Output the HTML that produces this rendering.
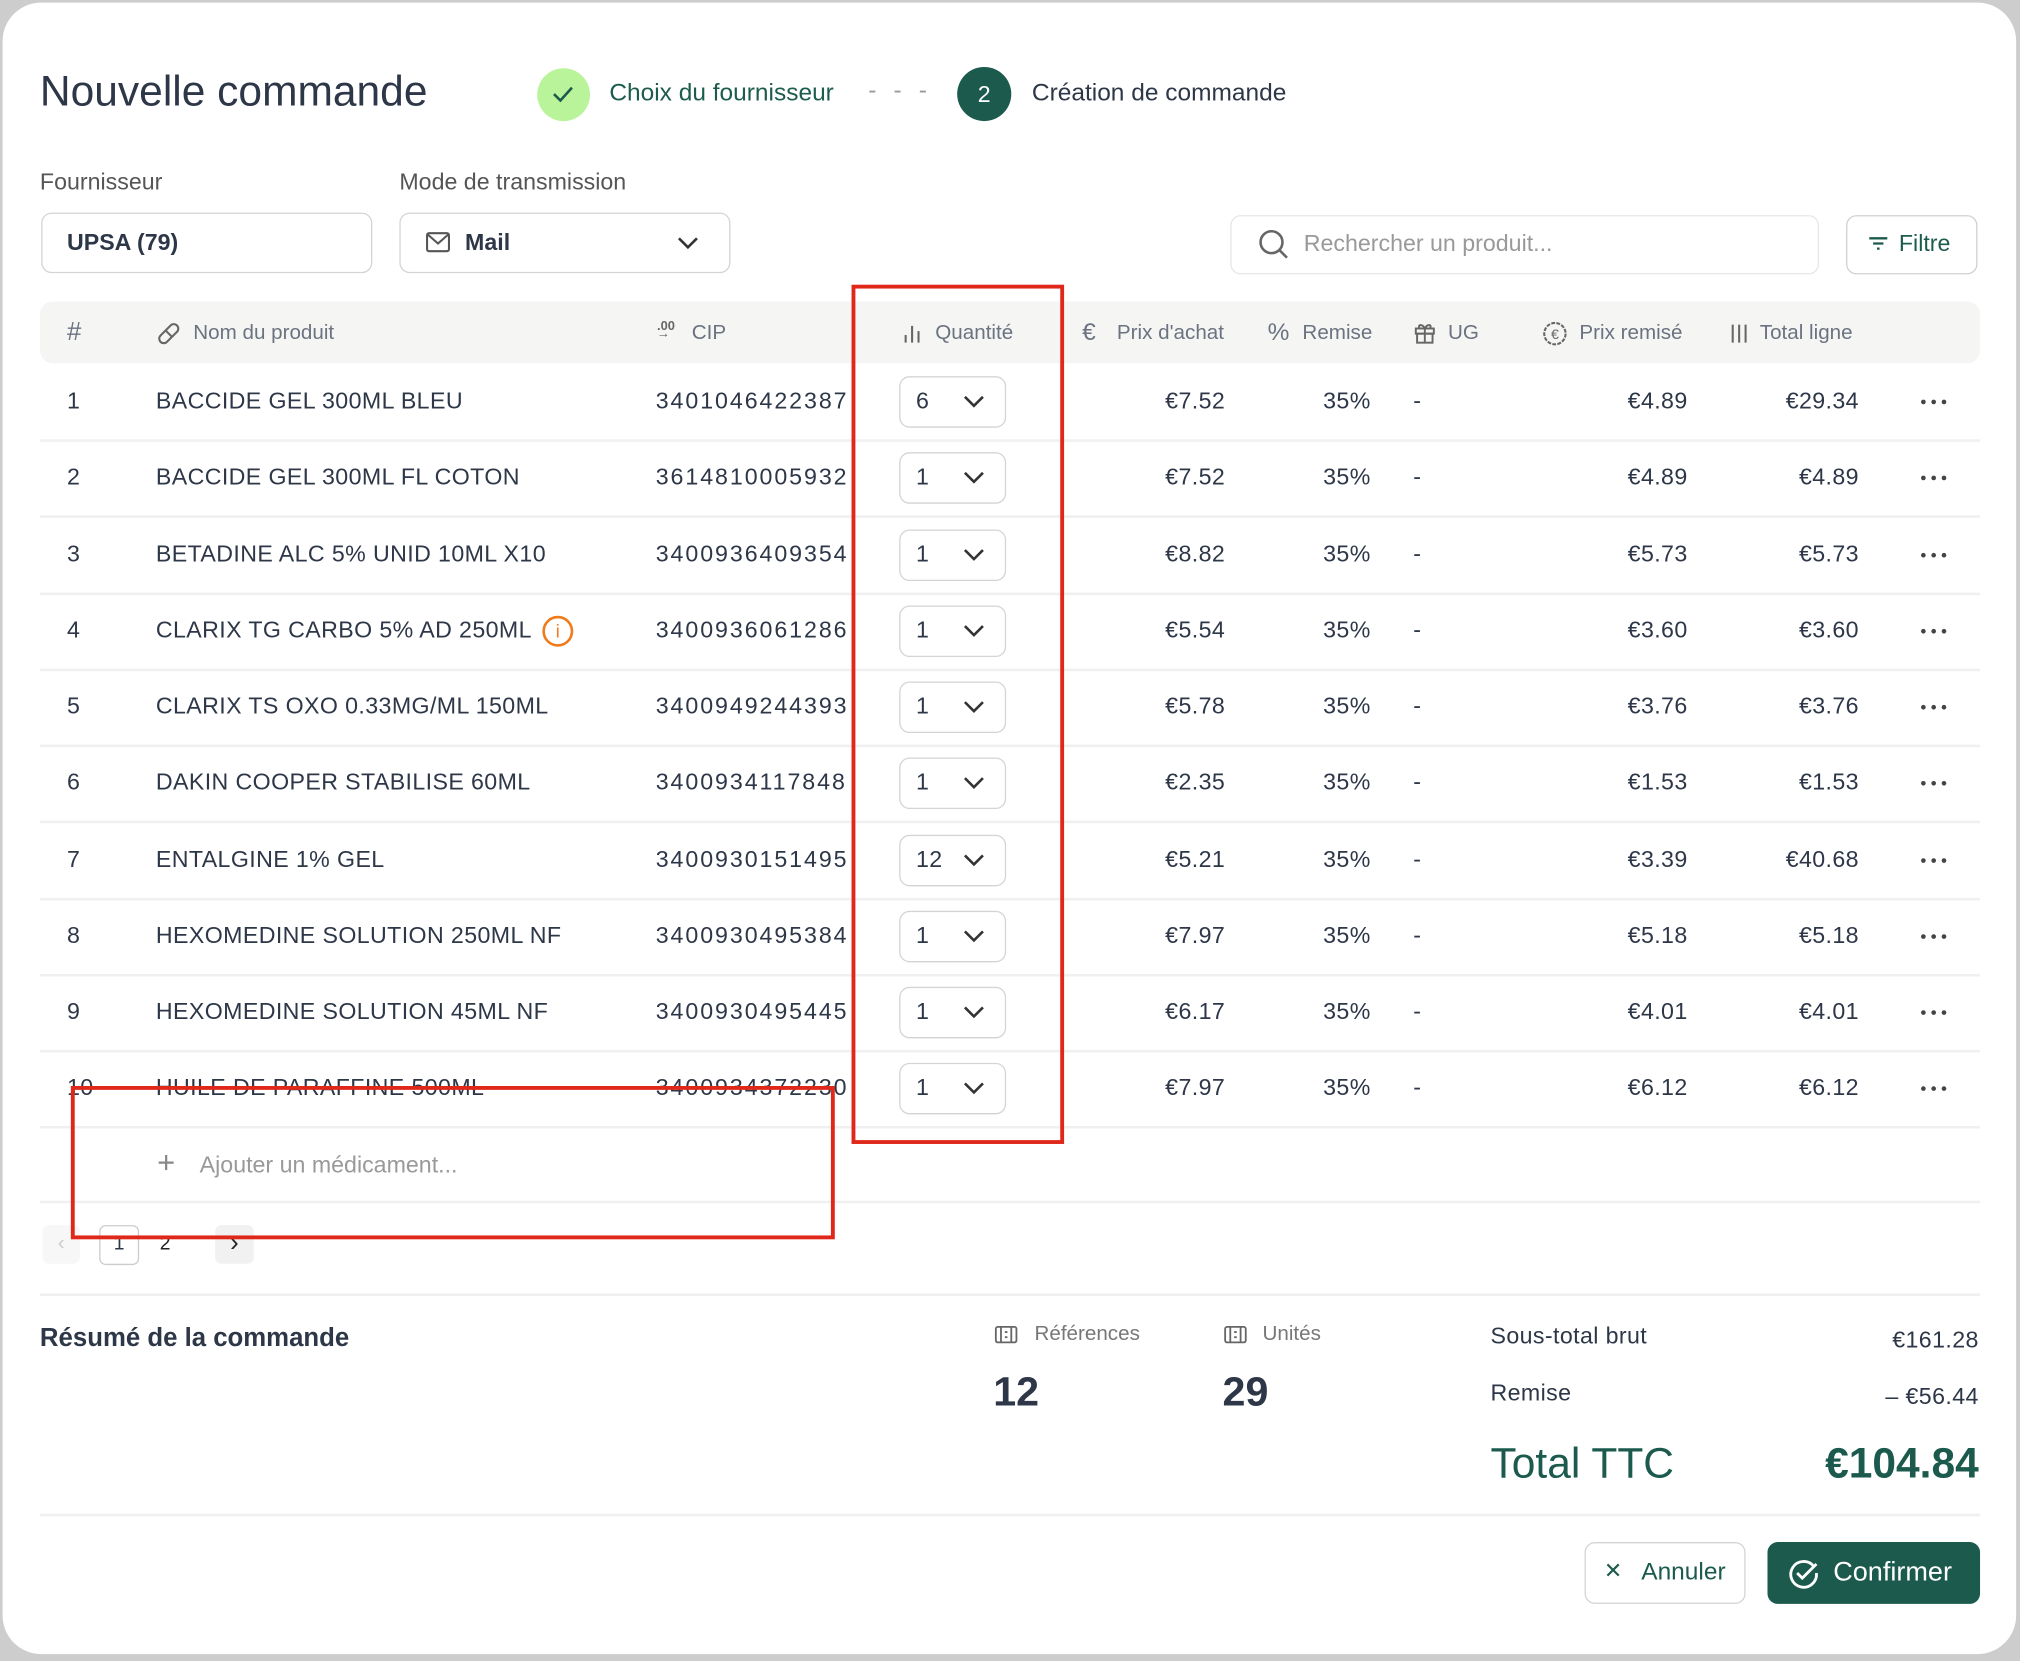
<!DOCTYPE html>
<html><head><meta charset="utf-8">
<style>
*{margin:0;padding:0;box-sizing:border-box}
html,body{width:2020px;height:1660px;overflow:hidden;background:#cdcdcd;font-family:"Liberation Sans",sans-serif}
#w{position:absolute;left:0;top:0;width:1568px;height:1289px;transform:scale(1.28826);transform-origin:0 0}
.card{position:absolute;left:2px;top:2px;width:1563px;height:1282px;background:#fff;border-radius:30px}
.a{position:absolute;white-space:nowrap}
.t{color:#2d3748;font-size:18px;letter-spacing:0.3px}
.hd{color:#6b7280;font-size:16px;top:249px}
.r{text-align:right}
.box{position:absolute;border:1px solid #d4d4d4;border-radius:8px;background:#fff}
.line{position:absolute;left:31px;width:1506px;height:2px;background:#f0f0f0}
svg{position:absolute}
.red{position:absolute;border:3px solid #e0281a}
</style></head><body><div id="w">
<div class="card"></div>
<div class="a" style="left:31px;top:52px;font-size:33px;color:#2d3748">Nouvelle commande</div>
<div class="a" style="left:417px;top:53px;width:41px;height:41px;border-radius:50%;background:#b9f39a"></div>
<svg style="left:427px;top:63px" width="20" height="20" viewBox="0 0 20 20"><path d="M3 10l5 5 9-10" fill="none" stroke="#1b5a4c" stroke-width="2"/></svg>
<div class="a" style="left:473px;top:62px;font-size:19px;color:#1d5c4d">Choix du fournisseur</div>
<div class="a" style="left:674px;top:60px;font-size:19px;color:#999;letter-spacing:4px">- - -</div>
<div class="a" style="left:743px;top:52px;width:42px;height:42px;border-radius:50%;background:#1b5a4c;color:#fff;font-size:18px;text-align:center;line-height:42px">2</div>
<div class="a" style="left:801px;top:62px;font-size:19px;color:#2d3748">Création de commande</div>

<div class="a" style="left:31px;top:131px;font-size:18px;color:#555">Fournisseur</div>
<div class="a" style="left:310px;top:131px;font-size:18px;color:#555">Mode de transmission</div>
<div class="box" style="left:32px;top:165px;width:257px;height:47px;border-width:1.5px"></div>
<div class="a" style="left:52px;top:178px;font-size:18px;font-weight:bold;color:#2d3748">UPSA (79)</div>
<div class="box" style="left:310px;top:165px;width:257px;height:47px;border-width:1.5px"></div>
<svg style="left:330px;top:179px" width="20" height="18" viewBox="0 0 20 18"><rect x="1.5" y="2" width="17" height="14" rx="1.5" fill="none" stroke="#555" stroke-width="1.6"/><path d="M2 3l8 7 8-7" fill="none" stroke="#555" stroke-width="1.6"/></svg>
<div class="a" style="left:361px;top:178px;font-size:18px;font-weight:bold;color:#2d3748">Mail</div>
<svg style="left:525px;top:181px" width="18" height="14" viewBox="0 0 18 14"><path d="M2 4l7 7 7-7" fill="none" stroke="#333" stroke-width="2"/></svg>

<div class="box" style="left:955px;top:167px;width:457px;height:46px;border-color:#e6e6e6"></div>
<svg style="left:976px;top:177px" width="26" height="26" viewBox="0 0 26 26"><circle cx="11" cy="11" r="8.5" fill="none" stroke="#666" stroke-width="2"/><path d="M17 17l6 6" stroke="#666" stroke-width="2"/></svg>
<div class="a" style="left:1012px;top:179px;font-size:18px;color:#999">Rechercher un produit...</div>
<div class="box" style="left:1433px;top:167px;width:102px;height:46px;border-color:#d0d0d0;border-width:1.5px"></div>
<svg style="left:1449px;top:182px" width="18" height="14" viewBox="0 0 18 14"><path d="M2 3h14M5 7h8M8 11h2" stroke="#1b5a4c" stroke-width="1.8"/></svg>
<div class="a" style="left:1474px;top:179px;font-size:18px;color:#1d5c4d">Filtre</div>

<div class="a" style="left:31px;top:234px;width:1506px;height:48px;background:#f5f6f4;border-radius:10px"></div>
<div class="a hd" style="left:52px;top:247px;font-size:20px">#</div>
<svg style="left:121px;top:249px" width="20" height="20" viewBox="0 0 20 20"><rect x="1" y="6.5" width="18" height="7" rx="3.5" transform="rotate(-45 10 10)" fill="none" stroke="#666" stroke-width="1.6"/><path d="M7.5 7.5l5 5" stroke="#666" stroke-width="1.6"/></svg>
<div class="a hd" style="left:150px;top:250px">Nom du produit</div>
<div class="a" style="left:510px;top:248px;font-size:10px;color:#666;font-weight:bold">.00<br><span style="font-size:10px;position:relative;top:-5px">→</span></div>
<div class="a hd" style="left:537px;top:250px">CIP</div>
<svg style="left:700px;top:250px" width="16" height="18" viewBox="0 0 16 18"><path d="M3 16v-6M8 16V3M13 16v-9" stroke="#666" stroke-width="1.6"/></svg>
<div class="a hd" style="left:726px;top:250px">Quantité</div>
<div class="a hd" style="left:840px;font-size:19px;top:248px">€</div>
<div class="a hd" style="left:867px;top:250px">Prix d'achat</div>
<div class="a hd" style="left:984px;font-size:19px;top:248px">%</div>
<div class="a hd" style="left:1011px;top:250px">Remise</div>
<svg style="left:1097px;top:249px" width="18" height="19" viewBox="0 0 18 19"><rect x="2" y="6" width="14" height="4" fill="none" stroke="#666" stroke-width="1.5"/><rect x="3" y="10" width="12" height="7" fill="none" stroke="#666" stroke-width="1.5"/><path d="M9 6v11M9 6c-2-4-6-3-4 0M9 6c2-4 6-3 4 0" fill="none" stroke="#666" stroke-width="1.5"/></svg>
<div class="a hd" style="left:1124px;top:250px">UG</div>
<svg style="left:1197px;top:249px" width="20" height="20" viewBox="0 0 20 20"><circle cx="10" cy="10" r="8.3" fill="none" stroke="#666" stroke-width="1.6" stroke-dasharray="3 1"/><text x="10" y="14" font-size="11" text-anchor="middle" fill="#666" font-family="Liberation Sans">€</text></svg>
<div class="a hd" style="left:1226px;top:250px">Prix remisé</div>
<svg style="left:1343px;top:250px" width="14" height="18" viewBox="0 0 14 18"><path d="M2 2v14M7 2v14M12 2v14" stroke="#666" stroke-width="1.6"/></svg>
<div class="a hd" style="left:1366px;top:250px">Total ligne</div>

<div id="rows"></div>

<div class="line" style="top:932px"></div>
<div class="a" style="left:122px;top:889px;font-size:24px;color:#888;font-weight:300">+</div>
<div class="a" style="left:155px;top:894px;font-size:18px;color:#999">Ajouter un médicament...</div>

<div class="a" style="left:33px;top:951px;width:29px;height:30px;background:#f7f7f7;border-radius:5px;color:#ccc;text-align:center;line-height:30px;font-size:16px">‹</div>
<div class="a" style="left:77px;top:951px;width:31px;height:31px;border:1.5px solid #ccc;border-radius:5px;color:#2d3748;text-align:center;line-height:28px;font-size:15px">1</div>
<div class="a" style="left:124px;top:957px;font-size:15px;color:#222">2</div>
<div class="a" style="left:167px;top:951px;width:30px;height:30px;background:#f1f1f1;border-radius:5px;color:#222;text-align:center;line-height:29px;font-size:20px">›</div>

<div class="line" style="top:1004px"></div>
<div class="a" style="left:31px;top:1028px;font-size:20px;font-weight:bold;color:#2d3748">Résumé de la commande</div>
<svg style="left:772px;top:1028px" width="18" height="16" viewBox="0 0 18 16"><rect x="1" y="2" width="16" height="12" rx="1.5" fill="none" stroke="#666" stroke-width="1.4"/><path d="M5 2v12M13 2v12M8 6h2M8 10h2" stroke="#666" stroke-width="1.4"/></svg>
<div class="a" style="left:803px;top:1027px;font-size:16px;color:#777">Références</div>
<svg style="left:950px;top:1028px" width="18" height="16" viewBox="0 0 18 16"><rect x="1" y="2" width="16" height="12" rx="1.5" fill="none" stroke="#666" stroke-width="1.4"/><path d="M5 2v12M13 2v12M8 6h2M8 10h2" stroke="#666" stroke-width="1.4"/></svg>
<div class="a" style="left:980px;top:1027px;font-size:16px;color:#777">Unités</div>
<div class="a" style="left:771px;top:1062px;font-size:32px;font-weight:bold;color:#2d3748">12</div>
<div class="a" style="left:949px;top:1062px;font-size:32px;font-weight:bold;color:#2d3748">29</div>
<div class="a t" style="left:1157px;top:1027px">Sous-total brut</div>
<div class="a t r" style="right:32px;top:1030px">€161.28</div>
<div class="a t" style="left:1157px;top:1071px">Remise</div>
<div class="a t r" style="right:32px;top:1074px">– €56.44</div>
<div class="a" style="left:1157px;top:1117px;font-size:33px;color:#1b5a4c">Total TTC</div>
<div class="a r" style="right:32px;top:1117px;font-size:33px;font-weight:bold;color:#1b5a4c">€104.84</div>

<div class="line" style="top:1175px"></div>
<div class="box" style="left:1230px;top:1197px;width:125px;height:48px;border-width:1.5px"></div>
<div class="a" style="left:1245px;top:1210px;font-size:17px;color:#1b5a4c">✕</div>
<div class="a" style="left:1274px;top:1210px;font-size:19px;color:#1b5a4c">Annuler</div>
<div class="a" style="left:1372px;top:1197px;width:165px;height:48px;background:#1b5a4c;border-radius:8px"></div>
<svg style="left:1386px;top:1207px" width="28" height="28" viewBox="0 0 28 28"><path d="M22 9A10 10 0 1 0 24 14" fill="none" stroke="#fff" stroke-width="2.2"/><path d="M9 14l4 4 11-11" fill="none" stroke="#fff" stroke-width="2.2"/></svg>
<div class="a" style="left:1423px;top:1209px;font-size:21px;color:#fff">Confirmer</div>

<div class="red" style="left:661px;top:221px;width:165px;height:667px"></div>
<div class="red" style="left:55px;top:843px;width:593px;height:119px"></div>
</div>
<script>
var d=[["1","BACCIDE GEL 300ML BLEU","3401046422387","6","€7.52","€4.89","€29.34"],
["2","BACCIDE GEL 300ML FL COTON","3614810005932","1","€7.52","€4.89","€4.89"],
["3","BETADINE ALC 5% UNID 10ML X10","3400936409354","1","€8.82","€5.73","€5.73"],
["4","CLARIX TG CARBO 5% AD 250ML","3400936061286","1","€5.54","€3.60","€3.60"],
["5","CLARIX TS OXO 0.33MG/ML 150ML","3400949244393","1","€5.78","€3.76","€3.76"],
["6","DAKIN COOPER STABILISE 60ML","3400934117848","1","€2.35","€1.53","€1.53"],
["7","ENTALGINE 1% GEL","3400930151495","12","€5.21","€3.39","€40.68"],
["8","HEXOMEDINE SOLUTION 250ML NF","3400930495384","1","€7.97","€5.18","€5.18"],
["9","HEXOMEDINE SOLUTION 45ML NF","3400930495445","1","€6.17","€4.01","€4.01"],
["10","HUILE DE PARAFFINE 500ML","3400934372230","1","€7.97","€6.12","€6.12"]];
var h="";
d.forEach(function(r,i){var c=312+i*59.25;var y=c-11;
h+='<div class="a t" style="left:52px;top:'+y+'px">'+r[0]+'</div>';
h+='<div class="a t" style="left:121px;top:'+y+'px">'+r[1]+'</div>';
if(i==3)h+='<div class="a" style="left:421px;top:'+(c-12)+'px;width:24px;height:24px;border:2px solid #f07a1a;border-radius:50%;color:#f07a1a;font-size:14px;text-align:center;line-height:20px">i</div>';
h+='<div class="a t" style="left:509px;top:'+y+'px;width:153px;overflow:hidden;letter-spacing:1.5px">'+r[2]+'</div>';
h+='<div class="box" style="left:698px;top:'+(c-20)+'px;width:83px;height:40px"></div>';
h+='<div class="a t" style="left:711px;top:'+y+'px">'+r[3]+'</div>';
h+='<svg style="left:747px;top:'+(c-6)+'px" width="18" height="12" viewBox="0 0 18 12"><path d="M2 2l7 7 7-7" fill="none" stroke="#333" stroke-width="2"/></svg>';
h+='<div class="a t r" style="right:'+(1568-951)+'px;top:'+y+'px">'+r[4]+'</div>';
h+='<div class="a t r" style="right:'+(1568-1064)+'px;top:'+y+'px">35%</div>';
h+='<div class="a t" style="left:1097px;top:'+y+'px">-</div>';
h+='<div class="a t r" style="right:'+(1568-1310)+'px;top:'+y+'px">'+r[5]+'</div>';
h+='<div class="a t r" style="right:'+(1568-1443)+'px;top:'+y+'px">'+r[6]+'</div>';
h+='<svg style="left:1490px;top:'+(c-3)+'px" width="22" height="6" viewBox="0 0 22 6"><circle cx="3" cy="3" r="1.8" fill="#444"/><circle cx="11" cy="3" r="1.8" fill="#444"/><circle cx="19" cy="3" r="1.8" fill="#444"/></svg>';
h+='<div class="line" style="top:'+(c+29)+'px"></div>';});
document.getElementById("rows").innerHTML=h;
</script>
</body></html>
